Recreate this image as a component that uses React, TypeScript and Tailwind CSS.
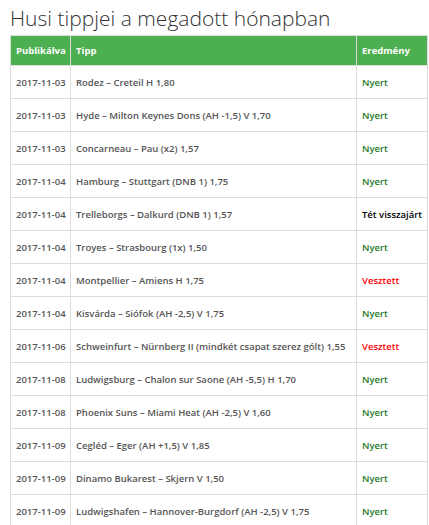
const rows: [string, string, string][] = [
  ['2017-11-03', 'Rodez – Creteil H 1,80', 'Nyert'],
  ['2017-11-03', 'Hyde – Milton Keynes Dons (AH -1,5) V 1,70', 'Nyert'],
  ['2017-11-03', 'Concarneau – Pau (x2) 1,57', 'Nyert'],
  ['2017-11-04', 'Hamburg – Stuttgart (DNB 1) 1,75', 'Nyert'],
  ['2017-11-04', 'Trelleborgs – Dalkurd (DNB 1) 1,57', 'Tét visszajárt'],
  ['2017-11-04', 'Troyes – Strasbourg (1x) 1,50', 'Nyert'],
  ['2017-11-04', 'Montpellier – Amiens H 1,75', 'Vesztett'],
  ['2017-11-04', 'Kisvárda – Siófok (AH -2,5) V 1,75', 'Nyert'],
  ['2017-11-06', 'Schweinfurt – Nürnberg II (mindkét csapat szerez gólt) 1,55', 'Vesztett'],
  ['2017-11-08', 'Ludwigsburg – Chalon sur Saone (AH -5,5) H 1,70', 'Nyert'],
  ['2017-11-08', 'Phoenix Suns – Miami Heat (AH -2,5) V 1,60', 'Nyert'],
  ['2017-11-09', 'Cegléd – Eger (AH +1,5) V 1,85', 'Nyert'],
  ['2017-11-09', 'Dinamo Bukarest – Skjern V 1,50', 'Nyert'],
  ['2017-11-09', 'Ludwigshafen – Hannover-Burgdorf (AH -2,5) V 1,75', 'Nyert'],
];

function resultClass(r: string) {
  if (r === 'Nyert') return 'text-[#1d7a2a]';
  if (r === 'Vesztett') return 'text-[#ff0000]';
  return 'text-black';
}

export default function App() {
  return (
    <div className="bg-white w-[429px] h-[525px] overflow-hidden pl-[10px] pr-[1px] font-['Open_Sans',sans-serif]">
      <h2 className="text-[21px] font-light text-[#333] leading-[30px] pt-[3px] mb-[2px]">
        Husi tippjei a megadott hónapban
      </h2>
      <table className="w-[418px] table-fixed border-collapse text-[9.5px] font-semibold">
        <thead>
          <tr className="bg-[#4caf50] text-white h-[30px]">
            <th className="w-[60px] border border-[#ddd] text-left font-bold px-[5px] pt-[2px]">Publikálva</th>
            <th className="w-[286px] border border-[#ddd] text-left font-bold px-[5px] pt-[2px]">Tipp</th>
            <th className="border border-[#ddd] text-left font-bold px-[5px] pt-[2px]">Eredmény</th>
          </tr>
        </thead>
        <tbody>
          {rows.map(([date, tip, res], i) => (
            <tr key={i} className="h-[33px]">
              <td className="border border-[#ddd] px-[5px] pt-[3px] text-[#555] whitespace-nowrap">{date}</td>
              <td className="border border-[#ddd] px-[5px] pt-[3px] text-[#555] whitespace-nowrap">{tip}</td>
              <td className={`border border-[#ddd] px-[5px] pt-[3px] whitespace-nowrap ${resultClass(res)}`}>{res}</td>
            </tr>
          ))}
        </tbody>
      </table>
    </div>
  );
}
